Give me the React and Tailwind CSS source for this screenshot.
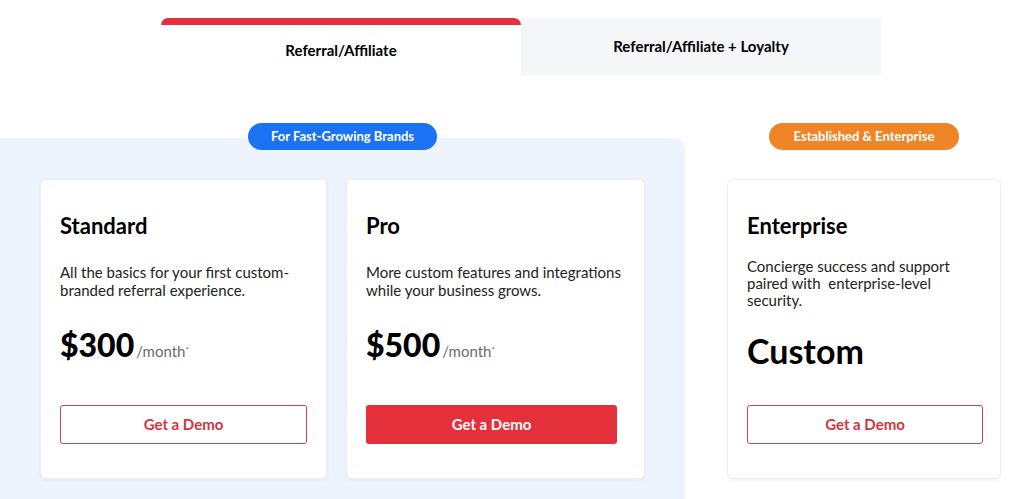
import React from 'react';

const font = { fontFamily: 'Lato, "Noto Sans", sans-serif' };

const PlanCard = ({ width, btnWidth, title, lines, price, custom, primary, descGap }) => (
    <div
        className={`${width} h-[300px] bg-white rounded-[6px] border border-[#eceef1] shadow-[0_1px_4px_rgba(0,0,0,0.05)] flex flex-col pl-[19px] pt-[32px] pb-[34px]`}
    >
        <h3 className="text-[22px] leading-[28px] font-bold text-black">{title}</h3>
        <p className={`${descGap} text-[15px] text-[#222]`}>
            {lines.map((l, i) => (
                <span key={i} className="block">{l}</span>
            ))}
        </p>
        {custom ? (
            <div className="mt-[22px] text-[34px] leading-[40px] font-bold text-black">Custom</div>
        ) : (
            <div className="mt-[28px] flex items-baseline">
                <span className="text-[32px] leading-[36px] font-black text-black">{price}</span>
                <span className="ml-[2px] text-[15px] text-[#6b6b6b]">/month<sup className="text-[8px]">*</sup></span>
            </div>
        )}
        <button
            className={`${btnWidth} mt-auto h-[39px] rounded-[3px] text-[15px] font-bold ${
                primary
                    ? 'bg-[#e4303a] text-white'
                    : 'bg-white border border-[#c8454f] text-[#d4343f]'
            }`}
        >
            Get a Demo
        </button>
    </div>
);

export default function App() {
    return (
        <div className="w-[1031px] h-[499px] bg-white overflow-hidden" style={font}>
            {/* Tabs */}
            <div className="flex pt-[18px] pl-[161px]">
                <div className="w-[360px] h-[57px] bg-white rounded-t-[7px] border-t-[7px] border-[#e3303a] flex items-center justify-center">
                    <span className="text-[15px] font-bold text-black">Referral/Affiliate</span>
                </div>
                <div className="w-[360px] h-[57px] bg-[#f5f6f8] flex items-center justify-center">
                    <span className="text-[15px] font-bold text-black">Referral/Affiliate + Loyalty</span>
                </div>
            </div>

            <div className="flex mt-[48px]">
                {/* Fast-growing group */}
                <div className="w-[685px] flex flex-col items-center">
                    <div className="relative z-10 w-[189px] h-[27px] rounded-full bg-[#1b72f3] flex items-center justify-center">
                        <span className="text-[13px] font-bold text-white">For Fast-Growing Brands</span>
                    </div>
                    <div className="-mt-[12px] w-full h-[400px] bg-[#eef4fd] rounded-tr-[10px] flex gap-[19px] pl-[40px] pt-[41px]">
                        <PlanCard
                            width="w-[287px]"
                            btnWidth="w-[247px]"
                            title="Standard"
                            lines={['All the basics for your first custom-', 'branded referral experience.']}
                            price="$300"
                            descGap="mt-[23px] leading-[18px]"
                        />
                        <PlanCard
                            width="w-[299px]"
                            btnWidth="w-[251px]"
                            title="Pro"
                            lines={['More custom features and integrations', 'while your business grows.']}
                            price="$500"
                            primary
                            descGap="mt-[23px] leading-[18px]"
                        />
                    </div>
                </div>

                {/* Enterprise group */}
                <div className="flex flex-col items-center pl-[42px]">
                    <div className="w-[190px] h-[27px] rounded-full bg-[#ef8527] flex items-center justify-center">
                        <span className="text-[13px] font-bold text-white">Established &amp; Enterprise</span>
                    </div>
                    <div className="mt-[29px]">
                        <PlanCard
                            width="w-[274px]"
                            btnWidth="w-[236px]"
                            title="Enterprise"
                            lines={['Concierge success and support', 'paired with\u00a0 enterprise-level', 'security.']}
                            custom
                            descGap="mt-[18px] leading-[17px]"
                        />
                    </div>
                </div>
            </div>
        </div>
    );
}
